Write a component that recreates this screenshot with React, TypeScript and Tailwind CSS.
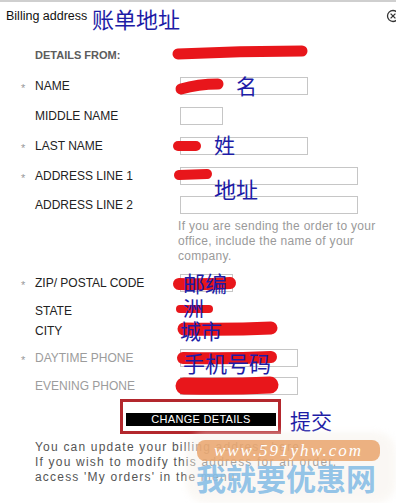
import type { ReactNode } from "react";

const sans = { fontFamily: '"Liberation Sans", Arial, sans-serif' };
const cjk = { fontFamily: '"Noto Sans CJK SC", sans-serif' };

function Row({
  req,
  label,
  muted,
  h,
  children,
}: {
  req?: boolean;
  label: string;
  muted?: boolean;
  h: string;
  children?: ReactNode;
}) {
  return (
    <div className={`flex items-center ${h}`}>
      <span className="w-[35px] pl-[21px] pt-[5px] text-[11px] leading-none text-[#9a9a9a]">
        {req ? "*" : ""}
      </span>
      <span className={`w-[145px] text-[12px] ${muted ? "text-[#9c9c9c]" : "text-[#222]"}`}>
        {label}
      </span>
      <div className="flex-1">{children}</div>
    </div>
  );
}

function Box({ w }: { w: string }) {
  return <div className={`h-[18px] border border-[#c6c6c6] bg-white ${w}`} />;
}

function Scribbles() {
  const strokes = [
    { d: "M178 54 Q240 51 302 51", w: 11 },
    { d: "M181 89 Q198 84 218 84", w: 11 },
    { d: "M178 146 L196 146", w: 10 },
    { d: "M179 175 L207 174", w: 10 },
    { d: "M179 284 Q205 285 230 283", w: 12 },
    { d: "M180 309 L209 309", w: 8 },
    { d: "M184 329 Q230 330 271 328", w: 13 },
    { d: "M183 358 Q230 359 271 357", w: 12 },
    { d: "M184 386 Q230 387 270 385", w: 17 },
  ];
  return (
    <svg className="pointer-events-none absolute left-0 top-0" width="396" height="503">
      {strokes.map((s, i) => (
        <path
          key={i}
          d={s.d}
          fill="none"
          stroke="#e8161b"
          strokeWidth={s.w}
          strokeLinecap="round"
        />
      ))}
    </svg>
  );
}

const notes = [
  { t: "账单地址", c: "left-[92px] top-[7px] text-[22px]" },
  { t: "名", c: "left-[236px] top-[75px] text-[21px]" },
  { t: "姓", c: "left-[214px] top-[134px] text-[21px]" },
  { t: "地址", c: "left-[214px] top-[177px] text-[22px]" },
  { t: "邮编", c: "left-[183px] top-[271px] text-[22px]" },
  { t: "洲", c: "left-[183px] top-[297px] text-[21px]" },
  { t: "城市", c: "left-[180px] top-[320px] text-[21px]" },
  { t: "手机号码", c: "left-[183px] top-[351px] text-[22px]" },
  { t: "提交", c: "left-[290px] top-[410px] text-[21px]" },
];

export default function App() {
  return (
    <div className="relative h-[503px] w-[396px] overflow-hidden bg-white" style={sans}>
      <div className="border-t-2 border-[#cfcfcf]">
        <div className="flex h-[38px] items-start justify-between pl-[6px] pt-[5px]">
          <span className="text-[12.5px] text-[#111]">Billing address</span>
          <svg width="14" height="14" viewBox="0 0 14 14" className="mr-[-4px] mt-[2px]">
            <circle cx="7" cy="7" r="5.5" fill="none" stroke="#333" strokeWidth="1.3" />
            <path d="M4.6 4.6 L9.4 9.4 M9.4 4.6 L4.6 9.4" stroke="#333" strokeWidth="1.3" />
          </svg>
        </div>

        <div className="flex h-[30px] items-center pl-[35px]">
          <span className="text-[11px] font-bold text-[#5c5c5c]">DETAILS FROM:</span>
        </div>

        <Row req label="NAME" h="h-[31px]">
          <Box w="w-[128px]" />
        </Row>
        <Row label="MIDDLE NAME" h="h-[30px]">
          <Box w="w-[43px]" />
        </Row>
        <Row req label="LAST NAME" h="h-[30px]">
          <Box w="w-[128px]" />
        </Row>
        <Row req label="ADDRESS LINE 1" h="h-[30px]">
          <Box w="w-[178px]" />
        </Row>
        <Row label="ADDRESS LINE 2" h="h-[28px]">
          <Box w="w-[178px]" />
        </Row>

        <p className="ml-[178px] w-[200px] text-[12px] leading-[15px] tracking-[0.3px] text-[#9a9a9a]">
          If you are sending the order to your office, include the name of your company.
        </p>

        <Row req label="ZIP/ POSTAL CODE" h="h-[38px]">
          <Box w="w-[53px]" />
        </Row>
        <Row label="STATE" h="h-[17px]" />
        <Row label="CITY" h="h-[24px]" />
        <Row req muted label="DAYTIME PHONE" h="h-[30px]">
          <Box w="w-[118px]" />
        </Row>
        <Row muted label="EVENING PHONE" h="h-[26px]">
          <Box w="w-[118px]" />
        </Row>

        <div className="ml-[120px] h-[35px] w-[161px] border-[3px] border-[#b3272d] pl-[3px] pt-[11px]">
          <div className="flex h-[13px] w-[150px] items-center justify-center bg-black text-[11px] leading-none tracking-[0.3px] text-white">
            CHANGE DETAILS
          </div>
        </div>

        <p className="mt-[6px] whitespace-nowrap pl-[35px] text-[12px] leading-[15px] tracking-[1.2px] text-[#555]">
          You can update your billing address here.
          <br />
          If you wish to modify this address for an order,
          <br />
          access 'My orders' in the menu.
        </p>
      </div>

      <Scribbles />

      {notes.map((n) => (
        <span
          key={n.t}
          className={`absolute leading-none text-[#1d1ca6] ${n.c}`}
          style={cjk}
        >
          {n.t}
        </span>
      ))}

      <div className="absolute left-[186px] top-[432px] h-[71px] w-[210px] rounded-[20px] bg-[#f6f1ea] opacity-50 blur-[3px]" />
      <div className="absolute left-[197px] top-[440px] flex h-[21px] w-[183px] items-center justify-center rounded-[8px] bg-[#e9a46c]/85">
        <span
          className="text-[17px] italic leading-none tracking-[2px] text-white"
          style={{ fontFamily: '"Liberation Serif", serif' }}
        >
          www.591yhw.com
        </span>
      </div>
      <span
        className="absolute left-[196px] top-[462px] text-[30px] font-bold leading-none text-[#86bde6]/90"
        style={cjk}
      >
        我就要优惠网
      </span>
    </div>
  );
}
